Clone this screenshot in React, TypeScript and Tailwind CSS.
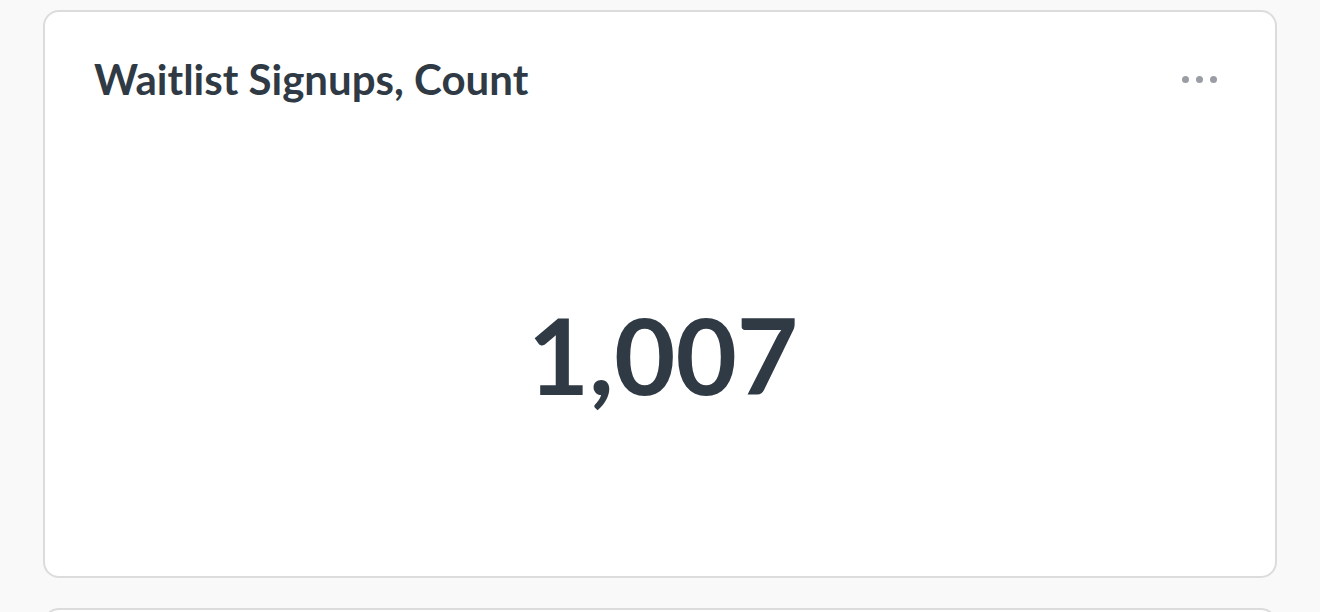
export default function App() {
  return (
    <div className="h-[612px] overflow-hidden bg-[#f9f9f9] px-[43px] pt-[10px] flex flex-col gap-[30px] font-['Lato','Liberation_Sans',sans-serif] text-[#2f3a45]">
      <div className="h-[568px] shrink-0 bg-white border-2 border-[#dcdcdc] rounded-[16px] flex flex-col">
        <div className="flex items-start justify-between pl-[49px] pr-[58px] pt-[42px] h-[120px]">
          <h2 className="text-[42px] leading-[50px] font-bold">Waitlist Signups, Count</h2>
          <button className="flex gap-[7px] mt-[22px]">
            <span className="w-[7px] h-[7px] rounded-full bg-[#9a9ea4]" />
            <span className="w-[7px] h-[7px] rounded-full bg-[#9a9ea4]" />
            <span className="w-[7px] h-[7px] rounded-full bg-[#9a9ea4]" />
          </button>
        </div>
        <div className="flex-1 flex items-center justify-center pl-[6px]">
          <span className="text-[106px] leading-none font-bold">1,007</span>
        </div>
      </div>
      <div className="h-[200px] shrink-0 bg-white border-2 border-[#dcdcdc] rounded-[16px]" />
    </div>
  );
}
